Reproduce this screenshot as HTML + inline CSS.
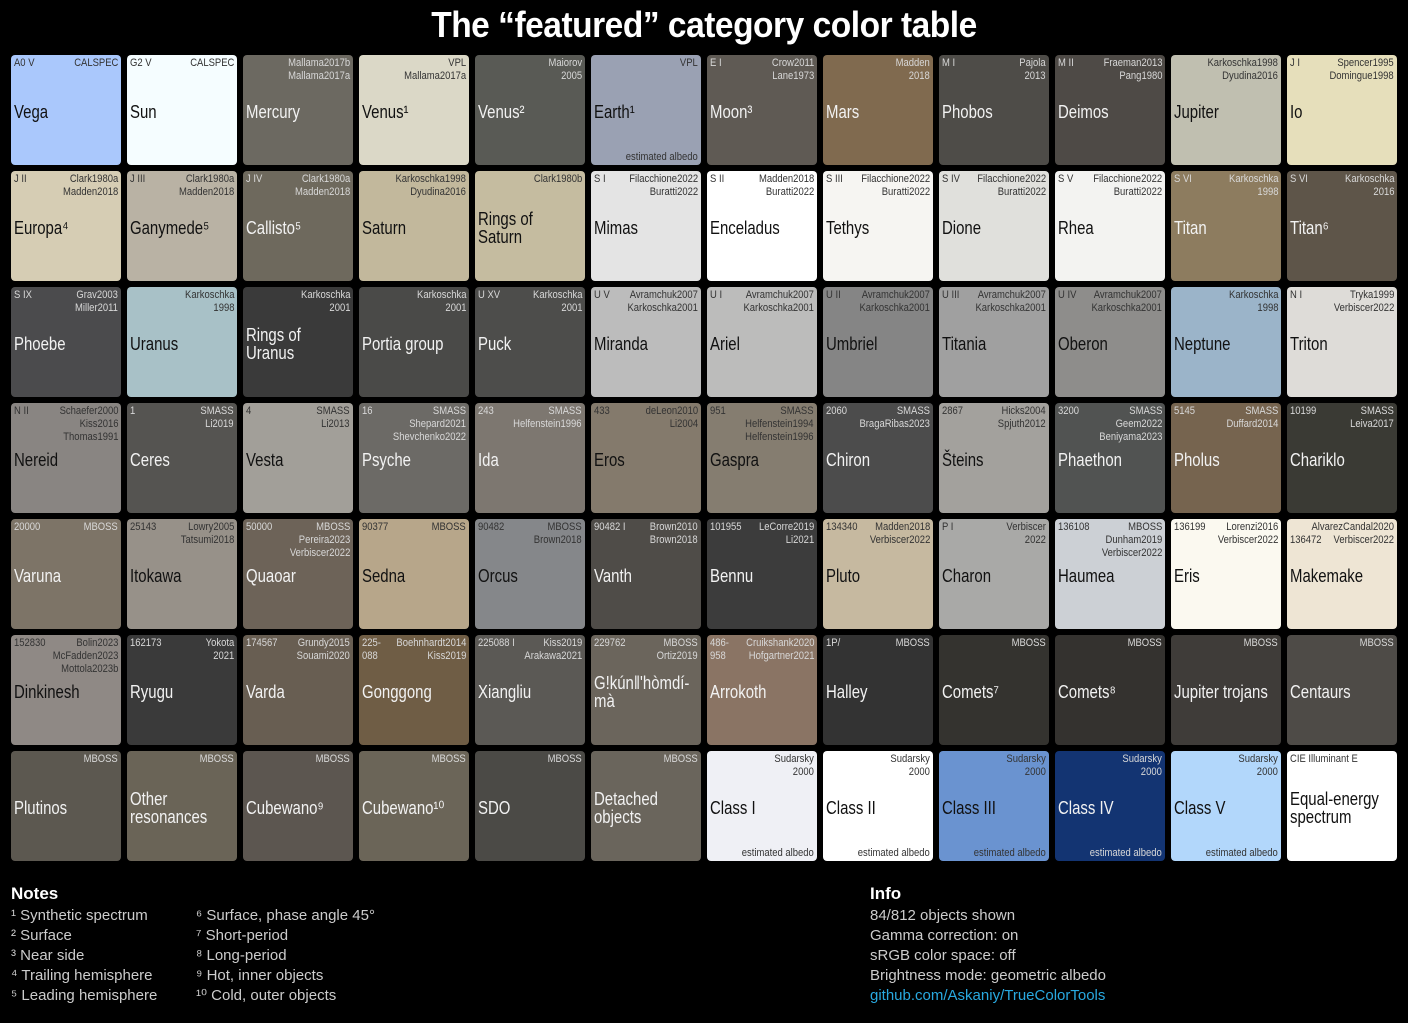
<!DOCTYPE html>
<html><head><meta charset="utf-8"><style>
*{margin:0;padding:0;box-sizing:border-box}
body{width:1408px;height:1023px;background:#000;position:relative;overflow:hidden;font-family:"Liberation Sans Narrow","Liberation Sans",sans-serif}
h1{position:absolute;left:0;top:4px;width:1408px;text-align:center;color:#fff;font:bold 36px "Liberation Sans",sans-serif;letter-spacing:-0.5px;transform:scaleX(0.93)}
.g{position:absolute;left:11px;top:55px;display:grid;grid-template-columns:repeat(12,110px);grid-auto-rows:110px;gap:6px}
.c{position:relative;border-radius:4px;overflow:hidden}
.d{color:#111}.l{color:#f2f2f2}
.d .tl,.d .tr,.d .b{color:#333}.l .tl,.l .tr,.l .b{color:#d8d8d8}
.tl,.tr,.b,.n{white-space:nowrap}
.tl{position:absolute;left:3px;top:2px;font-size:11px;line-height:13px;transform:scaleX(0.86);transform-origin:left top}
.tr{position:absolute;right:3px;top:2px;font-size:11px;line-height:13px;text-align:right;transform:scaleX(0.86);transform-origin:right top}
.b{position:absolute;right:3px;bottom:1px;font-size:11px;line-height:13px;transform:scaleX(0.86);transform-origin:right bottom}
.n{position:absolute;left:3px;top:0;height:110px;padding-top:4px;display:flex;align-items:center;font-size:18px;line-height:18px;transform:scaleX(0.83);transform-origin:left center}
.nt{position:absolute;left:11px;font-size:15px;line-height:20px;color:#ccc;white-space:nowrap}
.hd{font-weight:bold;color:#fff;font-size:17px}
</style></head><body>
<h1>The “featured” category color table</h1>
<div class="g">
<div class="c d" style="background:#aac8fc"><span class="tl">A0 V</span><span class="tr">CALSPEC</span><span class="n">Vega</span></div>
<div class="c d" style="background:#f5fdff"><span class="tl">G2 V</span><span class="tr">CALSPEC</span><span class="n">Sun</span></div>
<div class="c l" style="background:#6c6961"><span class="tr">Mallama2017b<br>Mallama2017a</span><span class="n">Mercury</span></div>
<div class="c d" style="background:#dbd8c7"><span class="tr">VPL<br>Mallama2017a</span><span class="n">Venus¹</span></div>
<div class="c l" style="background:#595a55"><span class="tr">Maiorov<br>2005</span><span class="n">Venus²</span></div>
<div class="c d" style="background:#9aa1b3"><span class="tr">VPL</span><span class="n">Earth¹</span><span class="b">estimated albedo</span></div>
<div class="c l" style="background:#5f5a54"><span class="tl">E I</span><span class="tr">Crow2011<br>Lane1973</span><span class="n">Moon³</span></div>
<div class="c l" style="background:#806a4f"><span class="tr">Madden<br>2018</span><span class="n">Mars</span></div>
<div class="c l" style="background:#4e4c48"><span class="tl">M I</span><span class="tr">Pajola<br>2013</span><span class="n">Phobos</span></div>
<div class="c l" style="background:#4e4a46"><span class="tl">M II</span><span class="tr">Fraeman2013<br>Pang1980</span><span class="n">Deimos</span></div>
<div class="c d" style="background:#c0bfb0"><span class="tr">Karkoschka1998<br>Dyudina2016</span><span class="n">Jupiter</span></div>
<div class="c d" style="background:#e6dfbb"><span class="tl">J I</span><span class="tr">Spencer1995<br>Domingue1998</span><span class="n">Io</span></div>

<div class="c d" style="background:#d6cdb4"><span class="tl">J II</span><span class="tr">Clark1980a<br>Madden2018</span><span class="n">Europa⁴</span></div>
<div class="c d" style="background:#b9b2a4"><span class="tl">J III</span><span class="tr">Clark1980a<br>Madden2018</span><span class="n">Ganymede⁵</span></div>
<div class="c l" style="background:#6e695d"><span class="tl">J IV</span><span class="tr">Clark1980a<br>Madden2018</span><span class="n">Callisto⁵</span></div>
<div class="c d" style="background:#c2b89c"><span class="tr">Karkoschka1998<br>Dyudina2016</span><span class="n">Saturn</span></div>
<div class="c d" style="background:#c5bca0"><span class="tr">Clark1980b</span><span class="n">Rings of<br>Saturn</span></div>
<div class="c d" style="background:#e4e4e4"><span class="tl">S I</span><span class="tr">Filacchione2022<br>Buratti2022</span><span class="n">Mimas</span></div>
<div class="c d" style="background:#ffffff"><span class="tl">S II</span><span class="tr">Madden2018<br>Buratti2022</span><span class="n">Enceladus</span></div>
<div class="c d" style="background:#f6f5f2"><span class="tl">S III</span><span class="tr">Filacchione2022<br>Buratti2022</span><span class="n">Tethys</span></div>
<div class="c d" style="background:#e0e0dc"><span class="tl">S IV</span><span class="tr">Filacchione2022<br>Buratti2022</span><span class="n">Dione</span></div>
<div class="c d" style="background:#f3f3f1"><span class="tl">S V</span><span class="tr">Filacchione2022<br>Buratti2022</span><span class="n">Rhea</span></div>
<div class="c l" style="background:#8d7c5f"><span class="tl">S VI</span><span class="tr">Karkoschka<br>1998</span><span class="n">Titan</span></div>
<div class="c l" style="background:#5e5549"><span class="tl">S VI</span><span class="tr">Karkoschka<br>2016</span><span class="n">Titan⁶</span></div>

<div class="c l" style="background:#4b4b4d"><span class="tl">S IX</span><span class="tr">Grav2003<br>Miller2011</span><span class="n">Phoebe</span></div>
<div class="c d" style="background:#a8c1c7"><span class="tr">Karkoschka<br>1998</span><span class="n">Uranus</span></div>
<div class="c l" style="background:#3a3a3a"><span class="tr">Karkoschka<br>2001</span><span class="n">Rings of<br>Uranus</span></div>
<div class="c l" style="background:#4a4a48"><span class="tr">Karkoschka<br>2001</span><span class="n">Portia group</span></div>
<div class="c l" style="background:#4d4d4b"><span class="tl">U XV</span><span class="tr">Karkoschka<br>2001</span><span class="n">Puck</span></div>
<div class="c d" style="background:#bcbcbc"><span class="tl">U V</span><span class="tr">Avramchuk2007<br>Karkoschka2001</span><span class="n">Miranda</span></div>
<div class="c d" style="background:#bcbcbb"><span class="tl">U I</span><span class="tr">Avramchuk2007<br>Karkoschka2001</span><span class="n">Ariel</span></div>
<div class="c d" style="background:#858585"><span class="tl">U II</span><span class="tr">Avramchuk2007<br>Karkoschka2001</span><span class="n">Umbriel</span></div>
<div class="c d" style="background:#a0a0a0"><span class="tl">U III</span><span class="tr">Avramchuk2007<br>Karkoschka2001</span><span class="n">Titania</span></div>
<div class="c d" style="background:#8e8d8b"><span class="tl">U IV</span><span class="tr">Avramchuk2007<br>Karkoschka2001</span><span class="n">Oberon</span></div>
<div class="c d" style="background:#9bb4c9"><span class="tr">Karkoschka<br>1998</span><span class="n">Neptune</span></div>
<div class="c d" style="background:#dedcd8"><span class="tl">N I</span><span class="tr">Tryka1999<br>Verbiscer2022</span><span class="n">Triton</span></div>

<div class="c d" style="background:#898582"><span class="tl">N II</span><span class="tr">Schaefer2000<br>Kiss2016<br>Thomas1991</span><span class="n">Nereid</span></div>
<div class="c l" style="background:#555451"><span class="tl">1</span><span class="tr">SMASS<br>Li2019</span><span class="n">Ceres</span></div>
<div class="c d" style="background:#a29f99"><span class="tl">4</span><span class="tr">SMASS<br>Li2013</span><span class="n">Vesta</span></div>
<div class="c l" style="background:#6c6a66"><span class="tl">16</span><span class="tr">SMASS<br>Shepard2021<br>Shevchenko2022</span><span class="n">Psyche</span></div>
<div class="c l" style="background:#7d7770"><span class="tl">243</span><span class="tr">SMASS<br>Helfenstein1996</span><span class="n">Ida</span></div>
<div class="c d" style="background:#847a6c"><span class="tl">433</span><span class="tr">deLeon2010<br>Li2004</span><span class="n">Eros</span></div>
<div class="c d" style="background:#857d70"><span class="tl">951</span><span class="tr">SMASS<br>Helfenstein1994<br>Helfenstein1996</span><span class="n">Gaspra</span></div>
<div class="c l" style="background:#4c4c4c"><span class="tl">2060</span><span class="tr">SMASS<br>BragaRibas2023</span><span class="n">Chiron</span></div>
<div class="c d" style="background:#a3a19d"><span class="tl">2867</span><span class="tr">Hicks2004<br>Spjuth2012</span><span class="n">Šteins</span></div>
<div class="c l" style="background:#515352"><span class="tl">3200</span><span class="tr">SMASS<br>Geem2022<br>Beniyama2023</span><span class="n">Phaethon</span></div>
<div class="c l" style="background:#76644f"><span class="tl">5145</span><span class="tr">SMASS<br>Duffard2014</span><span class="n">Pholus</span></div>
<div class="c l" style="background:#3a3a34"><span class="tl">10199</span><span class="tr">SMASS<br>Leiva2017</span><span class="n">Chariklo</span></div>

<div class="c l" style="background:#7d7467"><span class="tl">20000</span><span class="tr">MBOSS</span><span class="n">Varuna</span></div>
<div class="c d" style="background:#979189"><span class="tl">25143</span><span class="tr">Lowry2005<br>Tatsumi2018</span><span class="n">Itokawa</span></div>
<div class="c l" style="background:#6d6358"><span class="tl">50000</span><span class="tr">MBOSS<br>Pereira2023<br>Verbiscer2022</span><span class="n">Quaoar</span></div>
<div class="c d" style="background:#b7a68a"><span class="tl">90377</span><span class="tr">MBOSS</span><span class="n">Sedna</span></div>
<div class="c d" style="background:#85878a"><span class="tl">90482</span><span class="tr">MBOSS<br>Brown2018</span><span class="n">Orcus</span></div>
<div class="c l" style="background:#4f4c48"><span class="tl">90482 I</span><span class="tr">Brown2010<br>Brown2018</span><span class="n">Vanth</span></div>
<div class="c l" style="background:#3c3c3c"><span class="tl">101955</span><span class="tr">LeCorre2019<br>Li2021</span><span class="n">Bennu</span></div>
<div class="c d" style="background:#c6b9a0"><span class="tl">134340</span><span class="tr">Madden2018<br>Verbiscer2022</span><span class="n">Pluto</span></div>
<div class="c d" style="background:#a9a9a7"><span class="tl">P I</span><span class="tr">Verbiscer<br>2022</span><span class="n">Charon</span></div>
<div class="c d" style="background:#ccd0d5"><span class="tl">136108</span><span class="tr">MBOSS<br>Dunham2019<br>Verbiscer2022</span><span class="n">Haumea</span></div>
<div class="c d" style="background:#fbf9f0"><span class="tl">136199</span><span class="tr">Lorenzi2016<br>Verbiscer2022</span><span class="n">Eris</span></div>
<div class="c d" style="background:#eee5d4"><span class="tr">AlvarezCandal2020<br>Verbiscer2022</span><span class="tl" style="top:15px">136472</span><span class="n">Makemake</span></div>

<div class="c d" style="background:#8f8985"><span class="tl">152830</span><span class="tr">Bolin2023<br>McFadden2023<br>Mottola2023b</span><span class="n">Dinkinesh</span></div>
<div class="c l" style="background:#3a3a3a"><span class="tl">162173</span><span class="tr">Yokota<br>2021</span><span class="n">Ryugu</span></div>
<div class="c l" style="background:#685e52"><span class="tl">174567</span><span class="tr">Grundy2015<br>Souami2020</span><span class="n">Varda</span></div>
<div class="c l" style="background:#6f5d45"><span class="tl">225-<br>088</span><span class="tr">Boehnhardt2014<br>Kiss2019</span><span class="n">Gonggong</span></div>
<div class="c l" style="background:#5b5955"><span class="tl">225088 I</span><span class="tr">Kiss2019<br>Arakawa2021</span><span class="n">Xiangliu</span></div>
<div class="c l" style="background:#6b655c"><span class="tl">229762</span><span class="tr">MBOSS<br>Ortiz2019</span><span class="n">G!kúnǁ'hòmdí-<br>mà</span></div>
<div class="c l" style="background:#8a7464"><span class="tl">486-<br>958</span><span class="tr">Cruikshank2020<br>Hofgartner2021</span><span class="n">Arrokoth</span></div>
<div class="c l" style="background:#333333"><span class="tl">1P/</span><span class="tr">MBOSS</span><span class="n">Halley</span></div>
<div class="c l" style="background:#34332f"><span class="tr">MBOSS</span><span class="n">Comets⁷</span></div>
<div class="c l" style="background:#34322f"><span class="tr">MBOSS</span><span class="n">Comets⁸</span></div>
<div class="c l" style="background:#3f3c39"><span class="tr">MBOSS</span><span class="n">Jupiter trojans</span></div>
<div class="c l" style="background:#4e4b47"><span class="tr">MBOSS</span><span class="n">Centaurs</span></div>

<div class="c l" style="background:#5c5850"><span class="tr">MBOSS</span><span class="n">Plutinos</span></div>
<div class="c l" style="background:#6a6457"><span class="tr">MBOSS</span><span class="n">Other<br>resonances</span></div>
<div class="c l" style="background:#5c5650"><span class="tr">MBOSS</span><span class="n">Cubewano⁹</span></div>
<div class="c l" style="background:#6b6558"><span class="tr">MBOSS</span><span class="n">Cubewano¹⁰</span></div>
<div class="c l" style="background:#4b4a46"><span class="tr">MBOSS</span><span class="n">SDO</span></div>
<div class="c l" style="background:#6a655c"><span class="tr">MBOSS</span><span class="n">Detached<br>objects</span></div>
<div class="c d" style="background:#eff0f5"><span class="tr">Sudarsky<br>2000</span><span class="n">Class I</span><span class="b">estimated albedo</span></div>
<div class="c d" style="background:#ffffff"><span class="tr">Sudarsky<br>2000</span><span class="n">Class II</span><span class="b">estimated albedo</span></div>
<div class="c d" style="background:#6a93d0"><span class="tr">Sudarsky<br>2000</span><span class="n">Class III</span><span class="b">estimated albedo</span></div>
<div class="c l" style="background:#133472"><span class="tr">Sudarsky<br>2000</span><span class="n">Class IV</span><span class="b">estimated albedo</span></div>
<div class="c d" style="background:#b2d7fb"><span class="tr">Sudarsky<br>2000</span><span class="n">Class V</span><span class="b">estimated albedo</span></div>
<div class="c d" style="background:#ffffff"><span class="tl">CIE Illuminant E</span><span class="n">Equal-energy<br>spectrum</span></div>
</div>

<div class="nt hd" style="top:884px">Notes</div>
<div class="nt" style="top:906px">¹ Synthetic spectrum<br>² Surface<br>³ Near side<br>⁴ Trailing hemisphere<br>⁵ Leading hemisphere</div>
<div class="nt" style="top:906px;left:196px">⁶ Surface, phase angle 45°<br>⁷ Short-period<br>⁸ Long-period<br>⁹ Hot, inner objects<br>¹⁰ Cold, outer objects</div>
<div class="nt hd" style="top:884px;left:870px">Info</div>
<div class="nt" style="top:906px;left:870px">84/812 objects shown<br>Gamma correction: on<br>sRGB color space: off<br>Brightness mode: geometric albedo<br><span style="color:#29a9e0">github.com/Askaniy/TrueColorTools</span></div>
</body></html>
